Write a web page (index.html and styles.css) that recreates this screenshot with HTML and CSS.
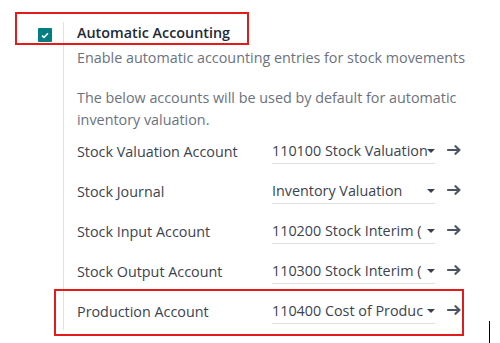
FILE: index.html
```html
<!DOCTYPE html>
<html lang="en">
<head>
    <meta charset="UTF-8">
    <meta name="viewport" content="width=device-width, initial-scale=1.0">
    <title>Automatic Accounting</title>
    <link rel="stylesheet" href="styles.css">
</head>
<body>
    <div class="setting">
        <div class="setting-left">
            <span class="checkbox">
                <svg width="8" height="7" viewBox="0 0 8 7"><path d="M1 3.6 L3 5.4 L7 1.2" fill="none" stroke="#fff" stroke-width="1.6"/></svg>
            </span>
        </div>
        <div class="setting-right">
            <div class="title">Automatic Accounting</div>
            <div class="desc">Enable automatic accounting entries for stock movements</div>
            <div class="note">The below accounts will be used by default for automatic inventory valuation.</div>

            <div class="row">
                <span class="label">Stock Valuation Account</span>
                <span class="field"><span class="value">110100 Stock Valuation</span><span class="caret"></span></span>
                <svg class="arrow" width="15" height="10" viewBox="0 0 15 10"><path d="M1 5 H12.5 M8.5 1.2 L12.5 5 L8.5 8.8" fill="none" stroke="#4b5563" stroke-width="2.2" stroke-linecap="round" stroke-linejoin="round"/></svg>
            </div>
            <div class="row">
                <span class="label">Stock Journal</span>
                <span class="field"><span class="value">Inventory Valuation</span><span class="caret"></span></span>
                <svg class="arrow" width="15" height="10" viewBox="0 0 15 10"><path d="M1 5 H12.5 M8.5 1.2 L12.5 5 L8.5 8.8" fill="none" stroke="#4b5563" stroke-width="2.2" stroke-linecap="round" stroke-linejoin="round"/></svg>
            </div>
            <div class="row">
                <span class="label">Stock Input Account</span>
                <span class="field"><span class="value">110200 Stock Interim (</span><span class="caret"></span></span>
                <svg class="arrow" width="15" height="10" viewBox="0 0 15 10"><path d="M1 5 H12.5 M8.5 1.2 L12.5 5 L8.5 8.8" fill="none" stroke="#4b5563" stroke-width="2.2" stroke-linecap="round" stroke-linejoin="round"/></svg>
            </div>
            <div class="row">
                <span class="label">Stock Output Account</span>
                <span class="field"><span class="value">110300 Stock Interim (</span><span class="caret"></span></span>
                <svg class="arrow" width="15" height="10" viewBox="0 0 15 10"><path d="M1 5 H12.5 M8.5 1.2 L12.5 5 L8.5 8.8" fill="none" stroke="#4b5563" stroke-width="2.2" stroke-linecap="round" stroke-linejoin="round"/></svg>
            </div>
            <div class="row">
                <span class="label">Production Account</span>
                <span class="field"><span class="value">110400 Cost of Produc</span><span class="caret"></span></span>
                <svg class="arrow" width="15" height="10" viewBox="0 0 15 10"><path d="M1 5 H12.5 M8.5 1.2 L12.5 5 L8.5 8.8" fill="none" stroke="#4b5563" stroke-width="2.2" stroke-linecap="round" stroke-linejoin="round"/></svg>
            </div>
        </div>
    </div>

    <div class="mark mark-title"></div>
    <div class="mark mark-production"></div>
    <div class="text-cursor"></div>
</body>
</html>
```

FILE: styles.css
```css
body {
    margin: 0;
    background: #fff;
    font-family: "Open Sans", "Noto Sans", sans-serif;
    font-size: 14.35px;
    color: #3c4350;
    position: relative;
    width: 500px;
    height: 343px;
    overflow: hidden;
}
.setting {
    display: flex;
    padding-top: 22px;
}
.setting-left {
    width: 63px;
    display: flex;
    justify-content: flex-end;
    padding-right: 11px;
    box-sizing: border-box;
}
.checkbox {
    margin-top: 6px;
    width: 14px;
    height: 14px;
    background: #017e84;
    border-radius: 1px;
    display: flex;
    align-items: center;
    justify-content: center;
}
.setting-right {
    border-left: 1px solid #dee2e6;
    padding-left: 13px;
    height: 308px;
    box-sizing: border-box;
    flex: 1;
}
.title {
    font-weight: 600;
    line-height: 22px;
    color: #1f2937;
}
.desc {
    color: #6b7280;
    line-height: 22px;
    margin-top: 3px;
}
.note {
    color: #6b7280;
    line-height: 22px;
    margin-top: 18px;
    width: 395px;
}
.row {
    display: flex;
    align-items: center;
    height: 40px;
}
.row:first-of-type {
    margin-top: 1px;
}
.label {
    width: 195px;
}
.field {
    width: 163px;
    display: flex;
    align-items: center;
    border-bottom: 1px solid #dee2e6;
    padding: 2px 0 3px;
}
.value {
    flex: 1;
    white-space: nowrap;
    overflow: hidden;
}
.caret {
    width: 0;
    height: 0;
    border-left: 4px solid transparent;
    border-right: 4px solid transparent;
    border-top: 4px solid #374151;
    margin: 2px 0 0 0;
}
.arrow {
    margin-left: 12px;
    margin-top: -3px;
}
.mark {
    position: absolute;
    border: 2px solid #e31b1b;
    box-sizing: border-box;
}
.mark-title {
    left: 15px;
    top: 12px;
    width: 234px;
    height: 33px;
}
.mark-production {
    left: 54px;
    top: 289px;
    width: 410px;
    height: 47px;
}
.text-cursor {
    position: absolute;
    left: 489px;
    top: 321px;
    width: 1px;
    height: 22px;
    background: #000;
}
```
